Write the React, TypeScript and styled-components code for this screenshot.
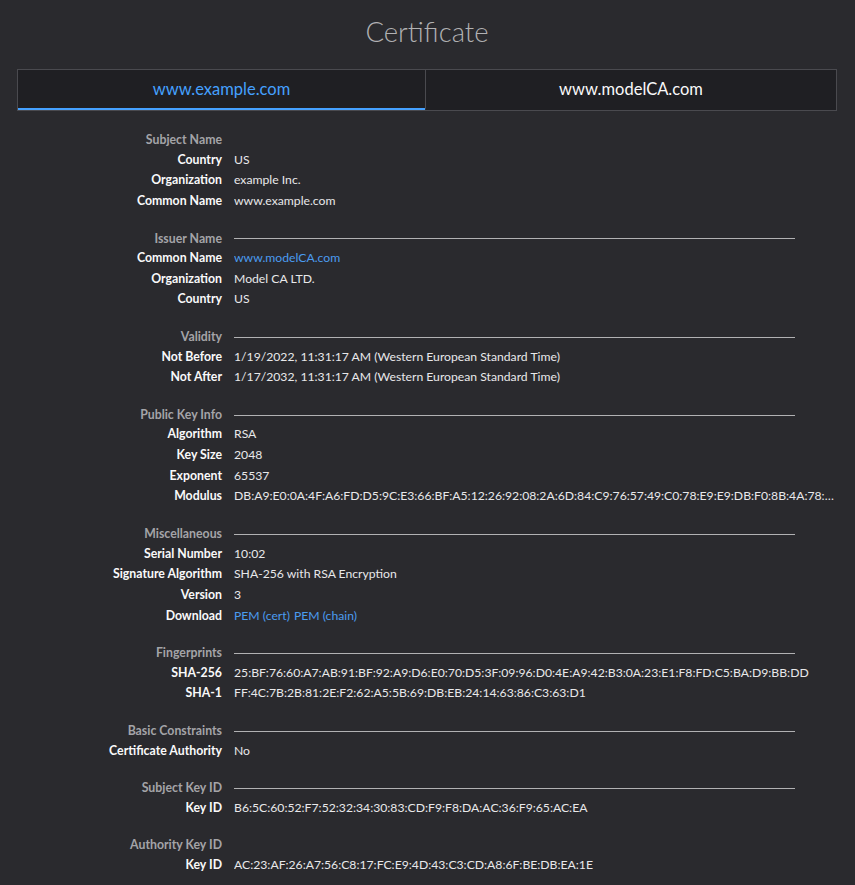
import React from "react";
import styled, { createGlobalStyle } from "styled-components";

const Global = createGlobalStyle`
  html, body { margin: 0; padding: 0; background: #2a2a2e; }
  body { font-family: Lato, "Noto Sans", sans-serif; color: #f9f9fa; }
`;

const Page = styled.div`
  padding: 0 18px 0 17px;
  min-height: 885px;
  box-sizing: border-box;
`;

const Title = styled.h1`
  margin: 0;
  height: 69px;
  display: flex;
  align-items: center;
  justify-content: center;
  padding-bottom: 6px;
  box-sizing: border-box;
  font-size: 27.5px;
  font-weight: 300;
  color: #b1b1b3;
`;

const Tabs = styled.div`
  display: grid;
  grid-template-columns: 407px 1fr;
  border: 1px solid #4a4a4f;
  background: #1f1f23;
`;

const Tab = styled.div<{ $active?: boolean }>`
  height: 40px;
  display: flex;
  align-items: center;
  justify-content: center;
  font-size: 16.5px;
  color: ${(p) => (p.$active ? "#45a1ff" : "#f9f9fa")};
  border-bottom: 2px solid ${(p) => (p.$active ? "#45a1ff" : "transparent")};
  box-sizing: border-box;
  & + & {
    border-left: 1px solid #4a4a4f;
  }
`;

const Sections = styled.div`
  padding-top: 20px;
`;

const Section = styled.section`
  display: grid;
  grid-template-columns: 205px 1fr;
  column-gap: 12px;
  margin-bottom: 18px;
`;

const HeaderLabel = styled.div`
  text-align: right;
  font-size: 12.3px;
  font-weight: 700;
  color: #a4a4a8;
  line-height: 18.5px;
  white-space: nowrap;
`;

const HeaderRule = styled.div<{ $show: boolean }>`
  display: flex;
  align-items: center;
  padding-right: 42px;
  &::after {
    content: "";
    flex: 1;
    height: 1px;
    background: ${(p) => (p.$show ? "#b1b1b3" : "transparent")};
  }
`;

const Label = styled.div`
  text-align: right;
  font-size: 12.3px;
  font-weight: 700;
  color: #f9f9fa;
  line-height: 20.67px;
  white-space: nowrap;
`;

const Value = styled.div`
  font-size: 12.2px;
  color: #e8e8ea;
  line-height: 20.67px;
  white-space: nowrap;
  overflow: hidden;
  text-overflow: ellipsis;
  min-width: 0;
`;

const Link = styled.a`
  color: #4a9cf0;
  text-decoration: none;
  & + & {
    margin-left: 4px;
  }
`;

type Row = [string, React.ReactNode];
type Sec = { title: string; rule: boolean; rows: Row[] };

const sections: Sec[] = [
  {
    title: "Subject Name",
    rule: false,
    rows: [
      ["Country", "US"],
      ["Organization", "example Inc."],
      ["Common Name", "www.example.com"],
    ],
  },
  {
    title: "Issuer Name",
    rule: true,
    rows: [
      ["Common Name", <Link href="#">www.modelCA.com</Link>],
      ["Organization", "Model CA LTD."],
      ["Country", "US"],
    ],
  },
  {
    title: "Validity",
    rule: true,
    rows: [
      ["Not Before", "1/19/2022, 11:31:17 AM (Western European Standard Time)"],
      ["Not After", "1/17/2032, 11:31:17 AM (Western European Standard Time)"],
    ],
  },
  {
    title: "Public Key Info",
    rule: true,
    rows: [
      ["Algorithm", "RSA"],
      ["Key Size", "2048"],
      ["Exponent", "65537"],
      [
        "Modulus",
        "DB:A9:E0:0A:4F:A6:FD:D5:9C:E3:66:BF:A5:12:26:92:08:2A:6D:84:C9:76:57:49:C0:78:E9:E9:DB:F0:8B:4A:78:1C:3E:55:9A:01:22:7F:40:16:AB:90",
      ],
    ],
  },
  {
    title: "Miscellaneous",
    rule: true,
    rows: [
      ["Serial Number", "10:02"],
      ["Signature Algorithm", "SHA-256 with RSA Encryption"],
      ["Version", "3"],
      [
        "Download",
        <>
          <Link href="#">PEM (cert)</Link>
          <Link href="#">PEM (chain)</Link>
        </>,
      ],
    ],
  },
  {
    title: "Fingerprints",
    rule: true,
    rows: [
      [
        "SHA-256",
        "25:BF:76:60:A7:AB:91:BF:92:A9:D6:E0:70:D5:3F:09:96:D0:4E:A9:42:B3:0A:23:E1:F8:FD:C5:BA:D9:BB:DD",
      ],
      ["SHA-1", "FF:4C:7B:2B:81:2E:F2:62:A5:5B:69:DB:EB:24:14:63:86:C3:63:D1"],
    ],
  },
  {
    title: "Basic Constraints",
    rule: true,
    rows: [["Certificate Authority", "No"]],
  },
  {
    title: "Subject Key ID",
    rule: true,
    rows: [["Key ID", "B6:5C:60:52:F7:52:32:34:30:83:CD:F9:F8:DA:AC:36:F9:65:AC:EA"]],
  },
  {
    title: "Authority Key ID",
    rule: false,
    rows: [["Key ID", "AC:23:AF:26:A7:56:C8:17:FC:E9:4D:43:C3:CD:A8:6F:BE:DB:EA:1E"]],
  },
];

export default function App() {
  return (
    <>
      <Global />
      <Page>
        <Title>Certificate</Title>
        <Tabs>
          <Tab $active>www.example.com</Tab>
          <Tab>www.modelCA.com</Tab>
        </Tabs>
        <Sections>
          {sections.map((s) => (
            <Section key={s.title}>
              <HeaderLabel>{s.title}</HeaderLabel>
              <HeaderRule $show={s.rule} />
              {s.rows.map(([l, v]) => (
                <React.Fragment key={l}>
                  <Label>{l}</Label>
                  <Value>{v}</Value>
                </React.Fragment>
              ))}
            </Section>
          ))}
        </Sections>
      </Page>
    </>
  );
}
